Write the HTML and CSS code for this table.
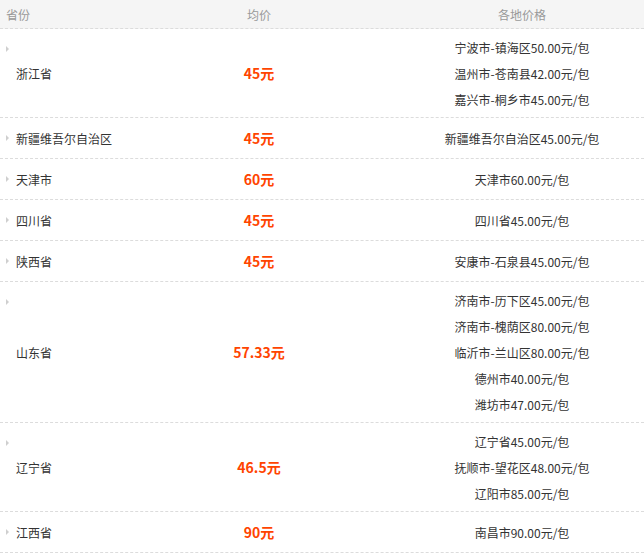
FILE: index.html
```html
<!DOCTYPE html>
<html lang="zh-CN">
<head>
<meta charset="utf-8">
<title>各地价格</title>
<link rel="stylesheet" href="styles.css">
</head>
<body>
<div class="table">
  <div class="row head">
    <div class="c1">省份</div>
    <div class="c2">均价</div>
    <div class="c3">各地价格</div>
  </div>
  <div class="row">
    <div class="c1 prov">浙江省</div>
    <div class="c2 avg">45元</div>
    <div class="c3 list">
      <div class="line">宁波市-镇海区50.00元/包</div>
      <div class="line">温州市-苍南县42.00元/包</div>
      <div class="line">嘉兴市-桐乡市45.00元/包</div>
    </div>
  </div>
  <div class="row">
    <div class="c1 prov">新疆维吾尔自治区</div>
    <div class="c2 avg">45元</div>
    <div class="c3 list">
      <div class="line">新疆维吾尔自治区45.00元/包</div>
    </div>
  </div>
  <div class="row">
    <div class="c1 prov">天津市</div>
    <div class="c2 avg">60元</div>
    <div class="c3 list">
      <div class="line">天津市60.00元/包</div>
    </div>
  </div>
  <div class="row">
    <div class="c1 prov">四川省</div>
    <div class="c2 avg">45元</div>
    <div class="c3 list">
      <div class="line">四川省45.00元/包</div>
    </div>
  </div>
  <div class="row">
    <div class="c1 prov">陕西省</div>
    <div class="c2 avg">45元</div>
    <div class="c3 list">
      <div class="line">安康市-石泉县45.00元/包</div>
    </div>
  </div>
  <div class="row">
    <div class="c1 prov">山东省</div>
    <div class="c2 avg">57.33元</div>
    <div class="c3 list">
      <div class="line">济南市-历下区45.00元/包</div>
      <div class="line">济南市-槐荫区80.00元/包</div>
      <div class="line">临沂市-兰山区80.00元/包</div>
      <div class="line">德州市40.00元/包</div>
      <div class="line">潍坊市47.00元/包</div>
    </div>
  </div>
  <div class="row">
    <div class="c1 prov">辽宁省</div>
    <div class="c2 avg">46.5元</div>
    <div class="c3 list">
      <div class="line">辽宁省45.00元/包</div>
      <div class="line">抚顺市-望花区48.00元/包</div>
      <div class="line">辽阳市85.00元/包</div>
    </div>
  </div>
  <div class="row">
    <div class="c1 prov">江西省</div>
    <div class="c2 avg">90元</div>
    <div class="c3 list">
      <div class="line">南昌市90.00元/包</div>
    </div>
  </div>
</div>
</body>
</html>
```

FILE: styles.css
```css
html, body {
  margin: 0;
  padding: 0;
  background: #fff;
}
body {
  font-family: "Noto Sans CJK SC", "Noto Sans", sans-serif;
  font-size: 12px;
  color: #333;
}
.table {
  width: 644px;
}
.row {
  display: grid;
  grid-template-columns: 118px 282px 244px;
  align-items: center;
  min-height: 40px;
  border-bottom: 1px dashed #dcdcdc;
}
.row.head {
  min-height: 28px;
  background: #f5f5f5;
  color: #999;
}
.head .c1 {
  padding-left: 6px;
}
.c2, .c3 {
  text-align: center;
}
.prov {
  position: relative;
  align-self: stretch;
  display: flex;
  align-items: center;
  padding-left: 16px;
}
.prov::before {
  content: "";
  position: absolute;
  left: 6px;
  top: 17px;
  border-left: 3px solid #cfcfcf;
  border-top: 3px solid transparent;
  border-bottom: 3px solid transparent;
}
.avg {
  color: #ff4400;
  font-size: 14px;
  font-weight: bold;
}
.list {
  padding: 6px 0 4px;
}
.line {
  line-height: 26px;
}
```
